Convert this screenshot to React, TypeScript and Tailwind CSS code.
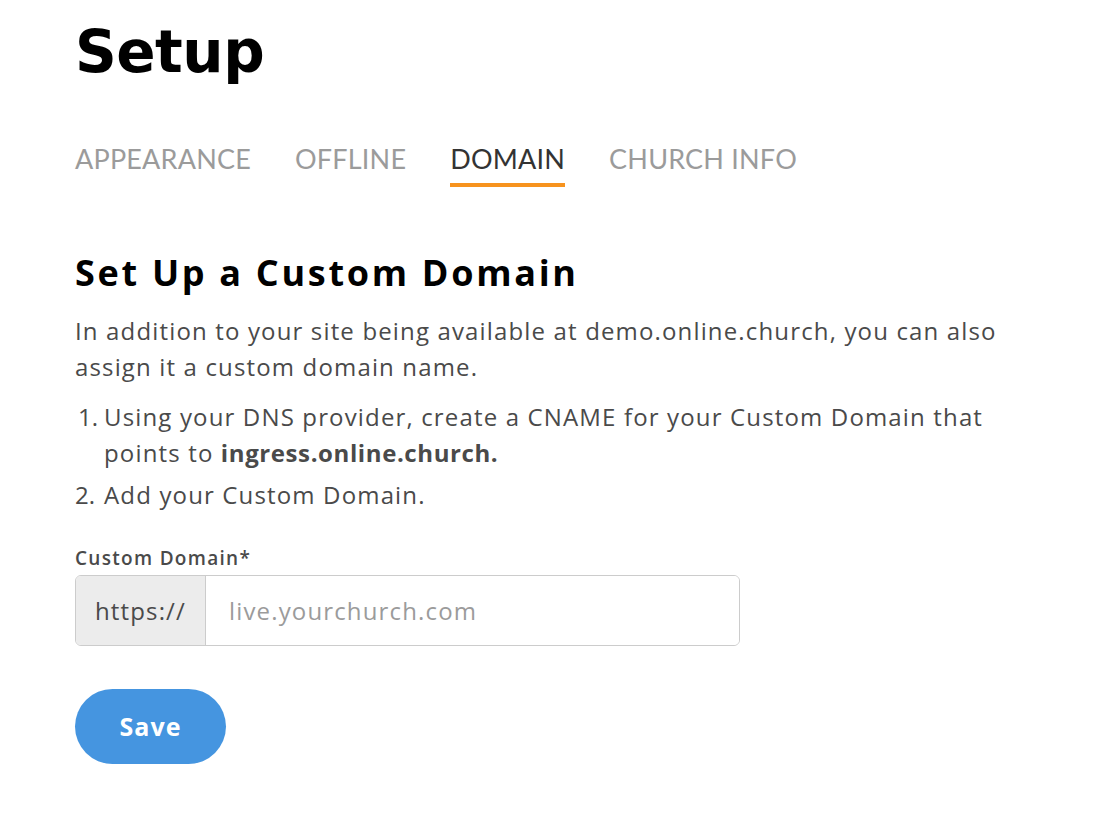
const TABS = ["APPEARANCE", "OFFLINE", "DOMAIN", "CHURCH INFO"];

export default function App() {
  return (
    <div className="min-h-screen bg-white font-['Open_Sans',sans-serif] text-[#4a4a4a]">
      <div className="px-[75px] pt-[17px]">
        {/* Page title */}
        <h1 className="font-['DejaVu_Sans',sans-serif] text-[58px] font-bold leading-[70px] tracking-[-0.5px] text-black">
          Setup
        </h1>

        {/* Tabs */}
        <div className="mt-[55px] flex gap-[44px] font-['Lato',sans-serif]">
          {TABS.map((tab) => (
            <div key={tab} className="flex flex-col">
              <span
                className={`text-[27px] leading-[34px] tracking-[0.2px] ${
                  tab === "DOMAIN" ? "text-[#333333]" : "text-[#9b9b9b]"
                }`}
              >
                {tab}
              </span>
              <div
                className={`mt-[7px] h-[4px] ${tab === "DOMAIN" ? "bg-[#f7931e]" : "bg-transparent"}`}
              />
            </div>
          ))}
        </div>

        {/* Section */}
        <h2 className="mt-[62px] text-[36px] font-bold leading-[48px] tracking-[2.7px] text-black">
          Set Up a Custom Domain
        </h2>
        <div className="tracking-[1.15px]">
          <p className="mt-[16px] text-[24px] leading-[36px]">
            In addition to your site being available at demo.online.church, you can also
            <br />
            assign it a custom domain name.
          </p>

          <ol className="mt-[14px] flex flex-col gap-[6px] text-[24px] leading-[36px]">
            <li className="flex">
              <span className="w-[29px] shrink-0 pl-[3px] tracking-[0px]">1.</span>
              <span>
                Using your DNS provider, create a CNAME for your Custom Domain that
                <br />
                points to <strong className="font-bold tracking-[0.6px]">ingress.online.church.</strong>
              </span>
            </li>
            <li className="flex">
              <span className="w-[29px] shrink-0 tracking-[0px]">2.</span>
              <span>Add your Custom Domain.</span>
            </li>
          </ol>

          {/* Field */}
          <label className="mt-[33px] block text-[19px] font-semibold leading-[24px] tracking-[1.3px]">
            Custom Domain*
          </label>
          <div className="mt-[5px] flex h-[71px] w-[665px] overflow-hidden rounded-[6px] border border-[#cccccc]">
            <div className="flex w-[130px] items-center justify-center border-r border-[#cccccc] bg-[#ececec] text-[24px]">
              https://
            </div>
            <input
              className="flex-1 bg-white px-[23px] text-[24px] tracking-[1.15px] outline-none placeholder:text-[#9b9b9b]"
              placeholder="live.yourchurch.com"
            />
          </div>

          <button className="mt-[43px] h-[75px] w-[151px] rounded-full bg-[#4595e0] text-[25px] font-bold tracking-[1px] text-white">
            Save
          </button>
        </div>
      </div>
    </div>
  );
}
